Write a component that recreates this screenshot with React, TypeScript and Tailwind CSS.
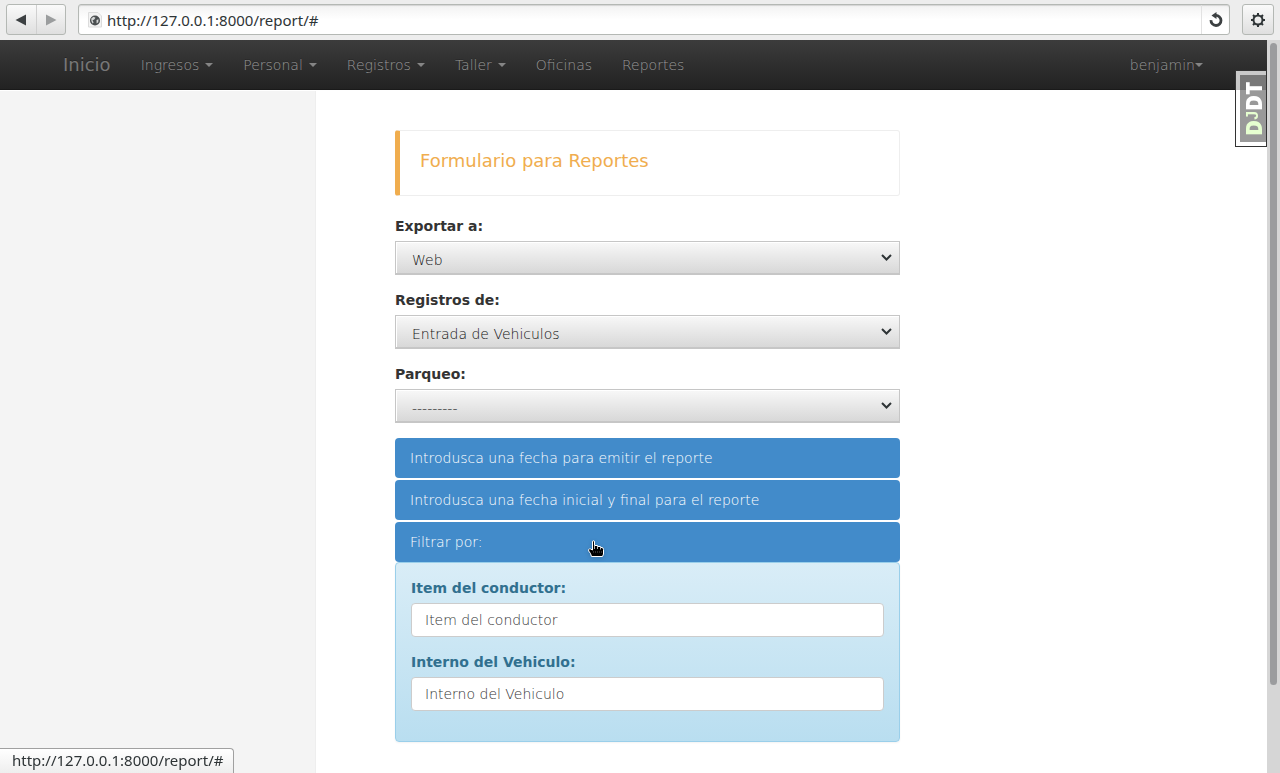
import React from "react";

const PAGE_URL = "http://127.0.0.1:8000/report/#";

function Caret() {
  return (
    <span
      aria-hidden="true"
      className="inline-block h-0 w-0 border-x-4 border-t-4 border-x-transparent border-t-[#858585] align-middle"
    />
  );
}

function BrowserBar() {
  return (
    <header className="flex h-10 shrink-0 items-start gap-3 bg-[#ededed] px-1.5 pt-1 font-['Noto_Sans',sans-serif] font-normal">
      <div className="flex h-[31px] w-[60px] rounded-[3px] border border-[#b4b8b4] bg-linear-to-b from-[#fafafa] to-[#dfdfdf]">
        <button type="button" aria-label="Atrás" className="flex flex-1 items-center justify-center border-r border-[#d0d0d0]">
          <svg width="12" height="12" viewBox="0 0 12 12" fill="#3c4042">
            <path d="M11 0.5V11.5L0.5 6Z" />
          </svg>
        </button>
        <button type="button" aria-label="Adelante" className="flex flex-1 items-center justify-center">
          <svg width="12" height="12" viewBox="0 0 12 12" fill="#9b9d9e">
            <path d="M1 0.5V11.5L11.5 6Z" />
          </svg>
        </button>
      </div>
      <div className="flex h-[31px] flex-1 items-center rounded-[3px] border border-[#b4b8b4] bg-linear-to-b from-[#f2f2f2] to-white to-50% shadow-[inset_0_1px_1px_#d4d4d4]">
        <svg className="ml-2 shrink-0" width="16" height="18" viewBox="0 0 16 18">
          <path d="M1.5 1.5H11L14.5 5V16H1.5Z" fill="#f3f3f3" stroke="#dcdcdc" />
          <circle cx="8" cy="9.5" r="5" fill="#4b4f51" />
          <path d="M4.300 7.500L6.500 5.800L8.500 6.800L7.300 8.600L5.500 9.200L6.600 11.500L5.600 12.500Q3.800 10.500 4.300 7.500Z M9.500 9L11.500 8.300L11.300 11.300L9.600 12.600Z" fill="#d4d6d6" />
        </svg>
        <input
          aria-label="Dirección"
          defaultValue={PAGE_URL}
          className="h-full min-w-0 flex-1 bg-transparent pl-1 text-[15px] text-[#2e3436] outline-none"
        />
        <button type="button" aria-label="Recargar" className="flex h-full w-7 items-center justify-center border-l border-[#e2e2e2]">
          <svg width="16" height="16" viewBox="0 0 16 16" fill="none">
            <path d="M3 8.200A5 5 0 1 0 7.500 3.500" stroke="#3c4042" strokeWidth="2.800" />
            <path d="M8.500 0V7L3.500 3.500Z" fill="#3c4042" />
          </svg>
        </button>
      </div>
      <button type="button" aria-label="Opciones" className="flex h-[31px] w-8 items-center justify-center rounded-[3px] border border-[#b4b8b4] bg-linear-to-b from-[#fafafa] to-[#dfdfdf]">
        <svg width="16" height="16" viewBox="0 0 16 16" fill="none" stroke="#2e3436">
          <circle cx="8" cy="8" r="4.500" strokeWidth="2" />
          <path d="M8 1V4M8 12V15M1 8H4M12 8H15M3 3L5 5M11 11L13 13M13 3L11 5M5 11L3 13" strokeWidth="2" />
        </svg>
      </button>
    </header>
  );
}

const NAV = [
  { label: "Ingresos", menu: true },
  { label: "Personal", menu: true },
  { label: "Registros", menu: true },
  { label: "Taller", menu: true },
  { label: "Oficinas", menu: false },
  { label: "Reportes", menu: false },
];

function Navbar() {
  return (
    <nav className="flex h-[50px] shrink-0 items-center border-b border-[#1a1a1a] bg-linear-to-b from-[#3c3c3c] to-[#222] px-12 text-sm text-[#999] [text-shadow:0_-1px_0_rgba(0,0,0,0.25)]">
      <a href="#" className="px-[15px] text-lg font-normal text-[#777]">Inicio</a>
      <div className="flex">
        {NAV.map((n) => (
          <a key={n.label} href="#" className="flex items-center gap-1.5 px-[15px]">
            {n.label}
            {n.menu && <Caret />}
          </a>
        ))}
      </div>
      <a href="#" className="ml-auto flex items-center px-4">
        benjamin
        <Caret />
      </a>
    </nav>
  );
}

function SelectField({ id, label, value }: { id: string; label: string; value: string }) {
  return (
    <div className="mb-[15px]">
      <label htmlFor={id} className="mb-[5px] block font-bold leading-5 text-[#333]">
        {label}
      </label>
      <div className="relative">
        <select
          id={id}
          className="block h-[34px] w-full appearance-none border border-b-2 border-[#c6c6c6] bg-linear-to-b from-[#f8f8f8] to-[#d8d8d8] pt-1 pl-4 text-[#111] shadow-[inset_1px_1px_0_#fff] outline-none"
        >
          <option>{value}</option>
        </select>
        <svg className="pointer-events-none absolute top-3 right-2" width="11" height="9" viewBox="0 0 11 9" fill="none">
          <path d="M1 2L5.500 6.500L10 2" stroke="#2e3436" strokeWidth="2" />
        </svg>
      </div>
    </div>
  );
}

function TextField({ id, label }: { id: string; label: string }) {
  return (
    <div className="mb-[15px]">
      <label htmlFor={id} className="mb-[5px] block font-bold leading-5 text-[#31708f]">
        {label}:
      </label>
      <input
        id={id}
        placeholder={label}
        className="block h-[34px] w-full rounded border border-[#ccc] bg-white px-[13px] text-[#555] outline-none placeholder:text-[#333]"
      />
    </div>
  );
}

function HandPointer() {
  return (
    <svg className="pointer-events-none absolute top-[18px] left-[193px] drop-shadow-sm" width="17" height="18" viewBox="0 0 17 18">
      <path
        d="M4.500 2Q4.500 0.700 5.500 0.700T6.500 2V5.500H9.500V6.500H12.500V7.500H14Q15.500 7.800 15.500 9.500V14L14.500 16.500H3.500L2.500 13.500L0.700 11V9.500Q1 8.500 2.500 9L4.500 10Z"
        fill="#000"
        stroke="#fff"
      />
      <path d="M6.500 6V9M9.500 7V9M12.500 8V9.500" stroke="#fff" strokeWidth="0.700" />
      <path d="M5 12H14" stroke="#777" strokeWidth="0.800" strokeDasharray="1 1" />
    </svg>
  );
}

function ReportForm() {
  return (
    <form className="w-full max-w-[505px] leading-5">
      <div className="mb-5 h-[66px] rounded-[3px] border border-l-[5px] border-[#eee] border-l-[#f0ad4e] px-5 pt-5">
        <h4 className="text-lg font-normal leading-5 text-[#f0ad4e]">Formulario para Reportes</h4>
      </div>
      <SelectField id="exportar" label="Exportar a:" value="Web" />
      <SelectField id="registros" label="Registros de:" value="Entrada de Vehiculos" />
      <SelectField id="parqueo" label="Parqueo:" value="---------" />
      <div className="flex flex-col gap-0.5 text-white">
        <a href="#" className="rounded bg-[#428bca] px-[15px] py-2.5">Introdusca una fecha para emitir el reporte</a>
        <a href="#" className="rounded bg-[#428bca] px-[15px] py-2.5">Introdusca una fecha inicial y final para el reporte</a>
        <a href="#" className="relative rounded bg-[#428bca] px-[15px] py-2.5">
          Filtrar por:
          <HandPointer />
        </a>
      </div>
      <div className="rounded border border-[#9acfea] bg-linear-to-b from-[#d9edf7] to-[#b9def0] p-[15px] shadow-[0_1px_2px_rgba(0,0,0,0.05)]">
        <TextField id="item" label="Item del conductor" />
        <TextField id="interno" label="Interno del Vehiculo" />
      </div>
    </form>
  );
}

export default function App() {
  return (
    <div className="flex h-screen flex-col overflow-hidden bg-white font-['DejaVu_Sans',sans-serif] text-sm font-extralight">
      <BrowserBar />
      <div className="relative flex min-h-0 flex-1">
        <div className="flex min-w-0 flex-1 flex-col">
          <Navbar />
          <div className="flex min-h-0 flex-1 pt-px">
            <aside className="w-79 border-r border-[#eee] bg-[#f4f4f4]" />
            <main className="flex-1 overflow-hidden pt-[39px] pl-[79px]">
              <ReportForm />
            </main>
          </div>
        </div>
        <div className="w-[13px] shrink-0 bg-[#d6d6d6] px-[3px] pt-[3px]">
          <div className="h-[88%] rounded-full bg-[#9b9c9e]" />
        </div>
        <a href="#" className="absolute top-[30px] right-[13px] h-[77px] w-8 border border-[#333] bg-white/75 pt-1 pl-1 font-['Open_Sans',sans-serif] text-[22px] font-extrabold">
          <span className="flex h-[67px] w-full rotate-180 items-center justify-center bg-black/40 leading-none text-white [writing-mode:vertical-rl]">
            <span>
              <span className="text-[#e6ffd0]">
                D<small className="font-['Liberation_Sans',sans-serif] text-base font-bold">J</small>
              </span>
              DT
            </span>
          </span>
        </a>
      </div>
      <div className="fixed bottom-0 left-0 flex h-[25px] w-[234px] items-center rounded-tr border-t border-r border-[#a0a0a0] bg-linear-to-b from-white to-[#eee] pl-3 font-['Noto_Sans',sans-serif] text-[15px] font-normal text-[#2e3436]">
        {PAGE_URL}
      </div>
    </div>
  );
}
